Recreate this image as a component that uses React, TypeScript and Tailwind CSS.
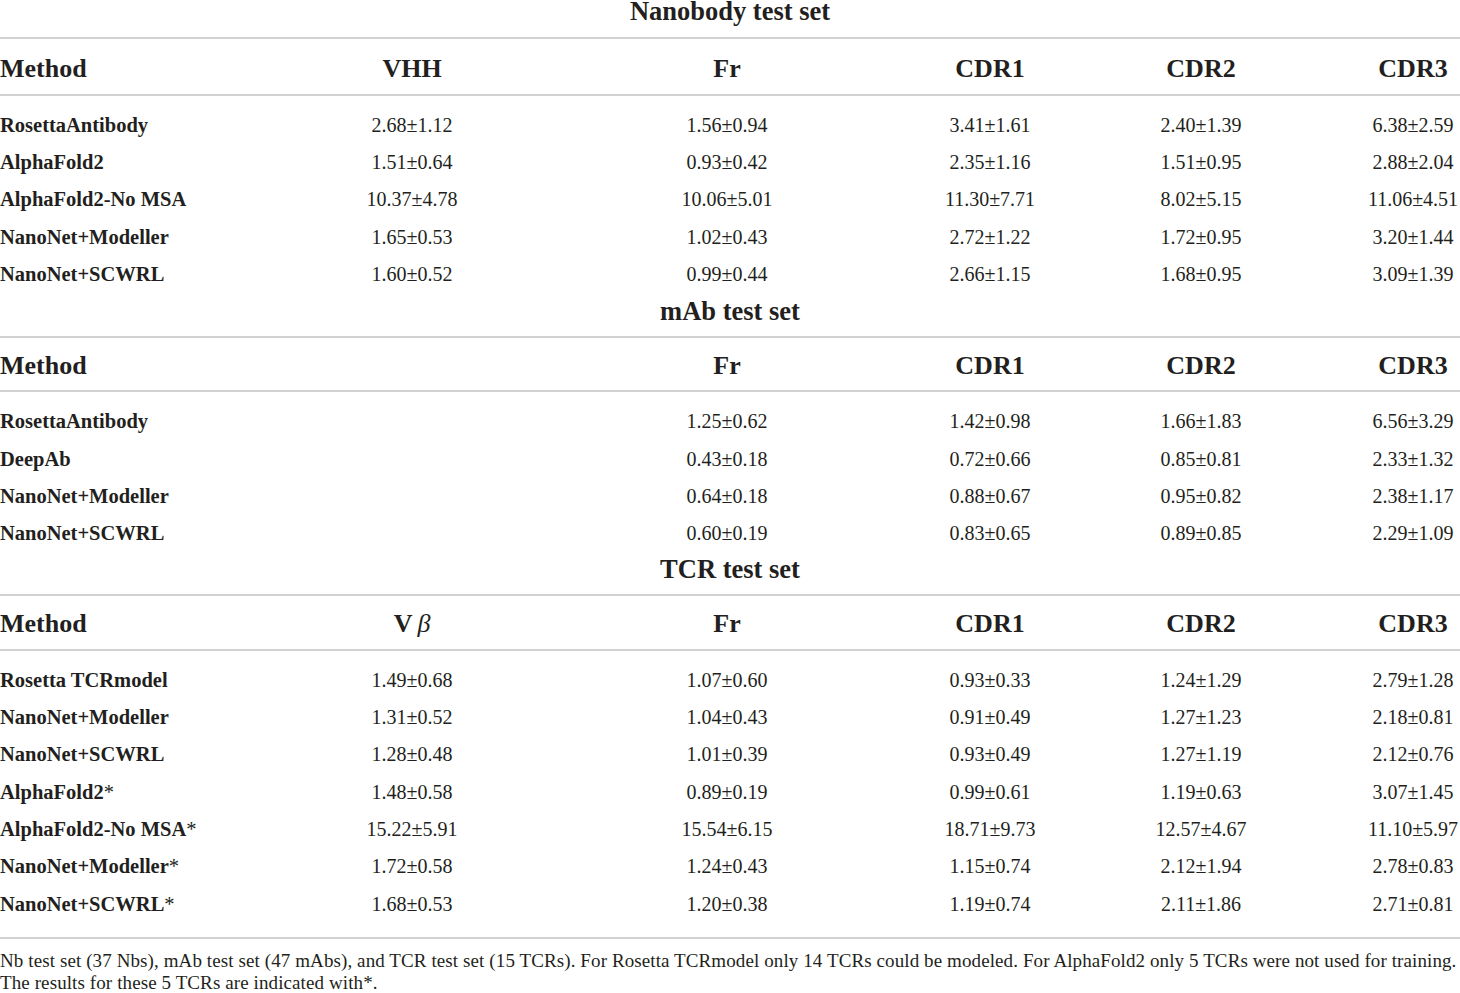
import React from "react";

type Row = { name: string; star?: boolean; vals: (string | null)[] };

const NANOBODY: Row[] = [
  { name: "RosettaAntibody", vals: ["2.68±1.12", "1.56±0.94", "3.41±1.61", "2.40±1.39", "6.38±2.59"] },
  { name: "AlphaFold2", vals: ["1.51±0.64", "0.93±0.42", "2.35±1.16", "1.51±0.95", "2.88±2.04"] },
  { name: "AlphaFold2-No MSA", vals: ["10.37±4.78", "10.06±5.01", "11.30±7.71", "8.02±5.15", "11.06±4.51"] },
  { name: "NanoNet+Modeller", vals: ["1.65±0.53", "1.02±0.43", "2.72±1.22", "1.72±0.95", "3.20±1.44"] },
  { name: "NanoNet+SCWRL", vals: ["1.60±0.52", "0.99±0.44", "2.66±1.15", "1.68±0.95", "3.09±1.39"] },
];

const MAB: Row[] = [
  { name: "RosettaAntibody", vals: [null, "1.25±0.62", "1.42±0.98", "1.66±1.83", "6.56±3.29"] },
  { name: "DeepAb", vals: [null, "0.43±0.18", "0.72±0.66", "0.85±0.81", "2.33±1.32"] },
  { name: "NanoNet+Modeller", vals: [null, "0.64±0.18", "0.88±0.67", "0.95±0.82", "2.38±1.17"] },
  { name: "NanoNet+SCWRL", vals: [null, "0.60±0.19", "0.83±0.65", "0.89±0.85", "2.29±1.09"] },
];

const TCR: Row[] = [
  { name: "Rosetta TCRmodel", vals: ["1.49±0.68", "1.07±0.60", "0.93±0.33", "1.24±1.29", "2.79±1.28"] },
  { name: "NanoNet+Modeller", vals: ["1.31±0.52", "1.04±0.43", "0.91±0.49", "1.27±1.23", "2.18±0.81"] },
  { name: "NanoNet+SCWRL", vals: ["1.28±0.48", "1.01±0.39", "0.93±0.49", "1.27±1.19", "2.12±0.76"] },
  { name: "AlphaFold2", star: true, vals: ["1.48±0.58", "0.89±0.19", "0.99±0.61", "1.19±0.63", "3.07±1.45"] },
  { name: "AlphaFold2-No MSA", star: true, vals: ["15.22±5.91", "15.54±6.15", "18.71±9.73", "12.57±4.67", "11.10±5.97"] },
  { name: "NanoNet+Modeller", star: true, vals: ["1.72±0.58", "1.24±0.43", "1.15±0.74", "2.12±1.94", "2.78±0.83"] },
  { name: "NanoNet+SCWRL", star: true, vals: ["1.68±0.53", "1.20±0.38", "1.19±0.74", "2.11±1.86", "2.71±0.81"] },
];

// column centres: 412 / 727 / 990 / 1201 / 1413
const GRID = "grid grid-cols-[314px_196px_434px_92px_330px_94px]";

function Rule() {
  return <div className="h-[2px] bg-[#d2d2d2]" />;
}

function Title({ text, box }: { text: string; box: string }) {
  return (
    <div className={`flex items-end justify-center text-[26.5px] leading-[24px] font-bold ${box}`}>
      <span>{text}</span>
    </div>
  );
}

function Header({ first, box }: { first: React.ReactNode; box: string }) {
  return (
    <div className={`${GRID} items-start text-[26px] font-bold leading-[30px] ${box}`}>
      <div>Method</div>
      <div className="flex justify-center whitespace-nowrap">{first}</div>
      <div className="flex justify-center">Fr</div>
      <div className="flex justify-center">CDR1</div>
      <div className="flex justify-center">CDR2</div>
      <div className="flex justify-center">CDR3</div>
    </div>
  );
}

function Body({ rows, box }: { rows: Row[]; box: string }) {
  return (
    <div className={box}>
      {rows.map((r, i) => (
        <div key={i} className={`${GRID} h-[37.33px] items-center text-[20px] leading-[24px]`}>
          <div className="font-bold whitespace-nowrap text-[20.5px]">
            {r.name}
            {r.star && <span className="font-normal">*</span>}
          </div>
          {r.vals.map((v, j) => (
            <div key={j} className="flex justify-center whitespace-nowrap">
              {v}
            </div>
          ))}
        </div>
      ))}
    </div>
  );
}

export default function App() {
  return (
    <div
      className="w-[1460px] h-[993px] bg-white text-[#231f20] overflow-hidden"
      style={{ fontFamily: '"Liberation Serif", "DejaVu Serif", serif' }}
    >
      {/* Nanobody */}
      <Title text="Nanobody test set" box="h-[37px] pb-[14px]" />
      <Rule />
      <Header first="VHH" box="h-[55px] pt-[15px]" />
      <Rule />
      <Body rows={NANOBODY} box="pt-[10px]" />

      {/* mAb */}
      <Title text="mAb test set" box="h-[43px] pb-[13px]" />
      <Rule />
      <Header first={null} box="h-[52px] pt-[13px]" />
      <Rule />
      <Body rows={MAB} box="pt-[11px]" />

      {/* TCR */}
      <Title text="TCR test set" box="h-[42px] pb-[13px]" />
      <Rule />
      <Header
        first={
          <span>
            V<span className="ml-[5px] italic font-normal">β</span>
          </span>
        }
        box="h-[53px] pt-[13px]"
      />
      <Rule />
      <Body rows={TCR} box="pt-[10px] pb-[15px]" />
      <Rule />

      {/* footnote */}
      <div className="pt-[11px] text-[19px] leading-[22px] tracking-[0.1px]">
        <div className="whitespace-nowrap">
          Nb test set (37 Nbs), mAb test set (47 mAbs), and TCR test set (15 TCRs). For Rosetta TCRmodel only 14
          TCRs could be modeled. For AlphaFold2 only 5 TCRs were not used for training.
        </div>
        <div className="whitespace-nowrap">The results for these 5 TCRs are indicated with*.</div>
      </div>
    </div>
  );
}
